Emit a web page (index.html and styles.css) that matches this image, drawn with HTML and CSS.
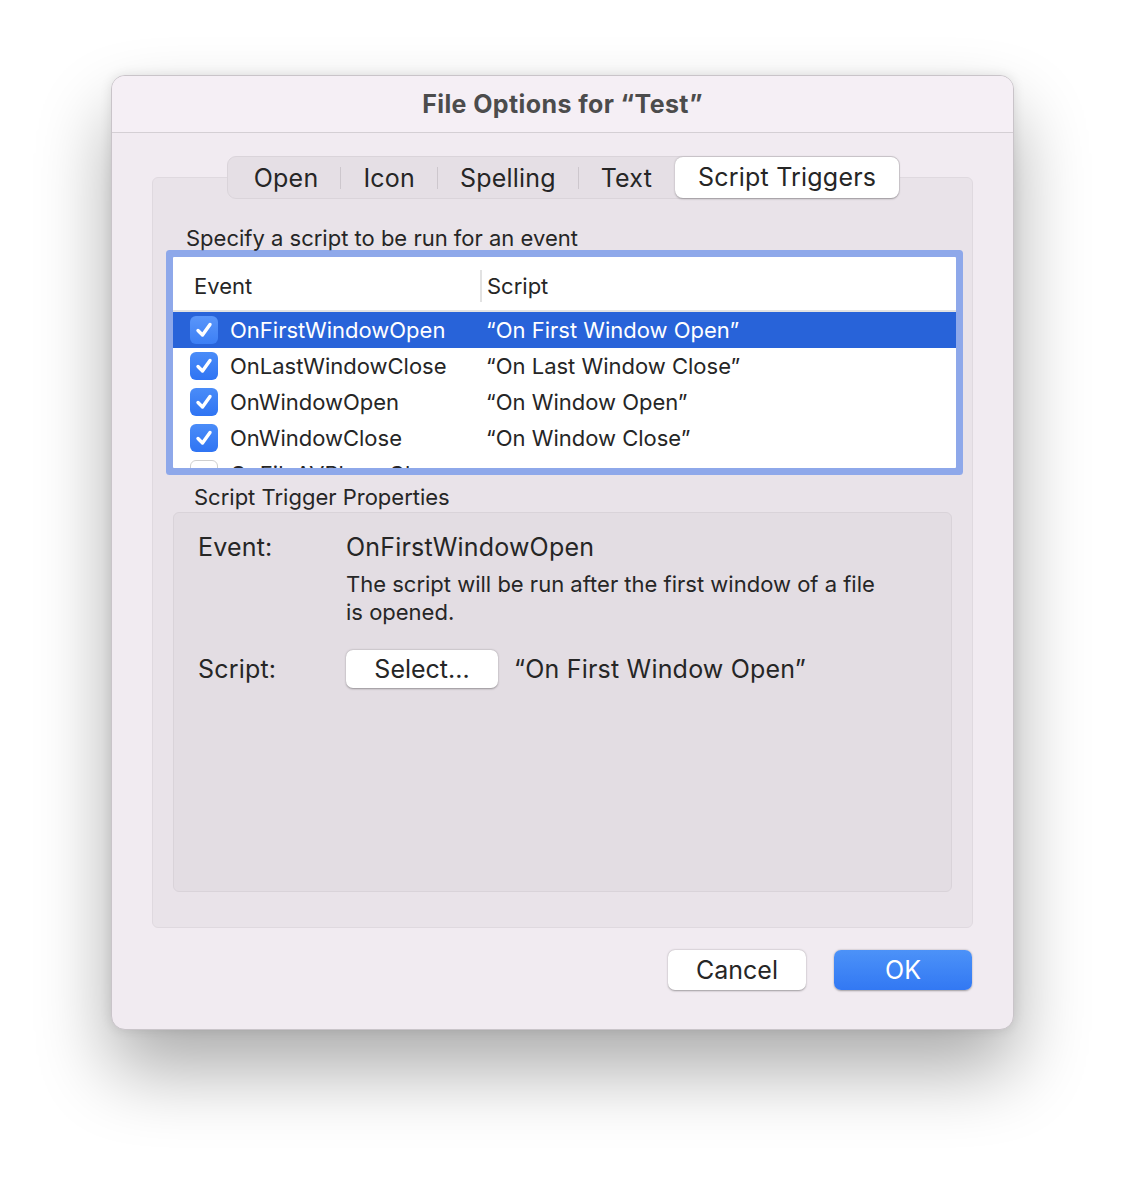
FILE: index.html
```html
<!DOCTYPE html>
<html>
<head>
  <meta charset="utf-8">
  <title>File Options for “Test”</title>
  <link rel="stylesheet" href="styles.css">
</head>
<body class="body">
  <div class="janela">
    <div class="titulo">File Options for “Test”</div>
    <div class="corpo">
      <div class="abas">
        <span class="aba">Open</span>
        <span class="sep"></span>
        <span class="aba">Icon</span>
        <span class="sep"></span>
        <span class="aba">Spelling</span>
        <span class="sep"></span>
        <span class="aba">Text</span>
        <span class="aba ativa">Script Triggers</span>
      </div>
      <div class="painel">
        <div class="rotulo">Specify a script to be run for an event</div>
        <div class="lista">
          <div class="cabecalho">
            <div class="col1">Event</div>
            <div class="divisor"></div>
            <div class="col2">Script</div>
          </div>
          <div class="linha selecionada">
            <div class="col1"><span class="check on"><svg viewBox="0 0 28 28"><path d="M8 14.5 L12.5 19 L20 8.5" /></svg></span>OnFirstWindowOpen</div>
            <div class="col2">“On First Window Open”</div>
          </div>
          <div class="linha">
            <div class="col1"><span class="check on"><svg viewBox="0 0 28 28"><path d="M8 14.5 L12.5 19 L20 8.5" /></svg></span>OnLastWindowClose</div>
            <div class="col2">“On Last Window Close”</div>
          </div>
          <div class="linha">
            <div class="col1"><span class="check on"><svg viewBox="0 0 28 28"><path d="M8 14.5 L12.5 19 L20 8.5" /></svg></span>OnWindowOpen</div>
            <div class="col2">“On Window Open”</div>
          </div>
          <div class="linha">
            <div class="col1"><span class="check on"><svg viewBox="0 0 28 28"><path d="M8 14.5 L12.5 19 L20 8.5" /></svg></span>OnWindowClose</div>
            <div class="col2">“On Window Close”</div>
          </div>
          <div class="linha">
            <div class="col1"><span class="check"></span>OnFileAVPlayerChange</div>
            <div class="col2"></div>
          </div>
        </div>
        <div class="rotulo2">Script Trigger Properties</div>
        <div class="props">
          <div class="prop">
            <div class="nome">Event:</div>
            <div class="valor">
              <div>OnFirstWindowOpen</div>
              <div class="desc">The script will be run after the first window of a file<br>is opened.</div>
            </div>
          </div>
          <div class="prop script">
            <div class="nome">Script:</div>
            <div class="valor linha-script">
              <button class="botao select">Select...</button>
              <span>“On First Window Open”</span>
            </div>
          </div>
        </div>
      </div>
      <div class="acoes">
        <button class="botao cancelar">Cancel</button>
        <button class="botao ok">OK</button>
      </div>
    </div>
  </div>
</body>
</html>
```

FILE: styles.css
```css
.body {
  margin: 0;
  min-height: 1178px;
  box-sizing: border-box;
  padding: 75px 0 0 111px;
  background-color: white;
  font-family: Inter, "Liberation Sans", sans-serif;
  color: #262626;
}

.janela {
  width: 901px;
  height: 953px;
  border: 1px solid #c9c4c9;
  border-radius: 14px;
  background-color: #f1ebf1;
  box-shadow: 0 40px 75px rgba(0, 0, 0, 0.33), 0 0 12px rgba(0, 0, 0, 0.1);
  overflow: hidden;
  display: flex;
  flex-direction: column;
}

.titulo {
  height: 56px;
  line-height: 56px;
  text-align: center;
  font-size: 25px;
  font-weight: 700;
  letter-spacing: 0.4px;
  color: #4c4c4c;
  background-color: #f5eff5;
  border-bottom: 1px solid #d4cfd4;
}

.corpo {
  flex: 1;
  display: flex;
  flex-direction: column;
  padding: 23px 40px 0 40px;
}

/* abas no topo */
.abas {
  align-self: center;
  position: relative;
  z-index: 1;
  display: flex;
  align-items: center;
  height: 43px;
  box-sizing: border-box;
  padding-left: 4px;
  background-color: #e5dfe5;
  border: 1px solid #dad4da;
  border-radius: 9px;
  margin-left: 2px;
}

.aba {
  padding: 0 22px;
  font-size: 25px;
  letter-spacing: 0.2px;
  color: #262626;
}

.sep {
  width: 1px;
  height: 22px;
  background-color: #cdc7cd;
}

.aba.ativa {
  background-color: white;
  height: 41px;
  line-height: 41px;
  padding: 0 23px;
  border-radius: 8px;
  box-shadow: 0 0.5px 2px rgba(0, 0, 0, 0.3);
  margin-left: 1px;
}

.painel {
  margin-top: -22px;
  height: 751px;
  box-sizing: border-box;
  padding: 48px 20px 0 20px;
  background-color: #e9e3e9;
  border: 1px solid #dfd9df;
  border-radius: 6px;
}

.rotulo {
  font-size: 22px;
  line-height: 24px;
  margin-left: 13px;
  margin-bottom: 7px;
}

.lista {
  height: 211px;
  margin: 0 -4px 0 0;
  background-color: white;
  overflow: hidden;
  box-shadow: 0 0 0 7px #8ea8ea;
  border-radius: 1px;
}

.cabecalho {
  display: flex;
  align-items: center;
  height: 55px;
  border-bottom: 2px solid #e2e2e2;
  font-size: 22px;
  padding-top: 5px;
  box-sizing: border-box;
}

.col1 {
  width: 286px;
  padding-left: 21px;
  display: flex;
  align-items: center;
}

.divisor {
  width: 2px;
  height: 32px;
  background-color: #e2e2e2;
  margin-right: 5px;
}

.linha {
  display: flex;
  align-items: center;
  height: 36px;
  font-size: 22px;
}

.linha .col1 {
  width: 296px;
  padding-left: 17px;
}

.linha.selecionada {
  background-color: #2863d9;
  color: white;
}

.check {
  width: 28px;
  height: 28px;
  box-sizing: border-box;
  border-radius: 6px;
  margin-right: 12px;
  background-color: white;
  border: 1px solid #cfcfcf;
  display: flex;
}

.check.on {
  border: none;
  background: linear-gradient(#4a8cf8, #2f74f3);
}

.selecionada .check.on {
  background: linear-gradient(#5a96fa, #3c7ff5);
}

.check svg {
  width: 28px;
  height: 28px;
}

.check path {
  fill: none;
  stroke: white;
  stroke-width: 3.4;
  stroke-linecap: round;
  stroke-linejoin: round;
}

.rotulo2 {
  font-size: 22px;
  line-height: 24px;
  margin: 17px 0 3px 21px;
}

.props {
  height: 380px;
  box-sizing: border-box;
  padding: 20px 24px;
  background-color: #e3dde3;
  border: 1px solid #d9d3d9;
  border-radius: 6px;
}

.prop {
  display: flex;
  font-size: 25px;
  line-height: 28px;
  letter-spacing: 0.2px;
}

.nome {
  width: 148px;
}

.desc {
  font-size: 22px;
  letter-spacing: 0;
  margin-top: 9px;
}

.prop.script {
  margin-top: 24px;
  align-items: center;
}

.linha-script {
  display: flex;
  align-items: center;
  gap: 16px;
}

.botao {
  font-family: Inter, "Liberation Sans", sans-serif;
  font-size: 25px;
  color: #262626;
  background-color: white;
  border: none;
  border-radius: 7px;
  box-shadow: 0 0.5px 2px rgba(0, 0, 0, 0.35);
  height: 40px;
  width: 138px;
  padding: 0;
}

.botao.select {
  width: 152px;
  height: 38px;
}

.acoes {
  display: flex;
  justify-content: flex-end;
  gap: 28px;
  margin-top: 22px;
  padding-right: 1px;
}

.botao.ok {
  color: white;
  background: linear-gradient(#4c92f8, #3278f3);
}
```
